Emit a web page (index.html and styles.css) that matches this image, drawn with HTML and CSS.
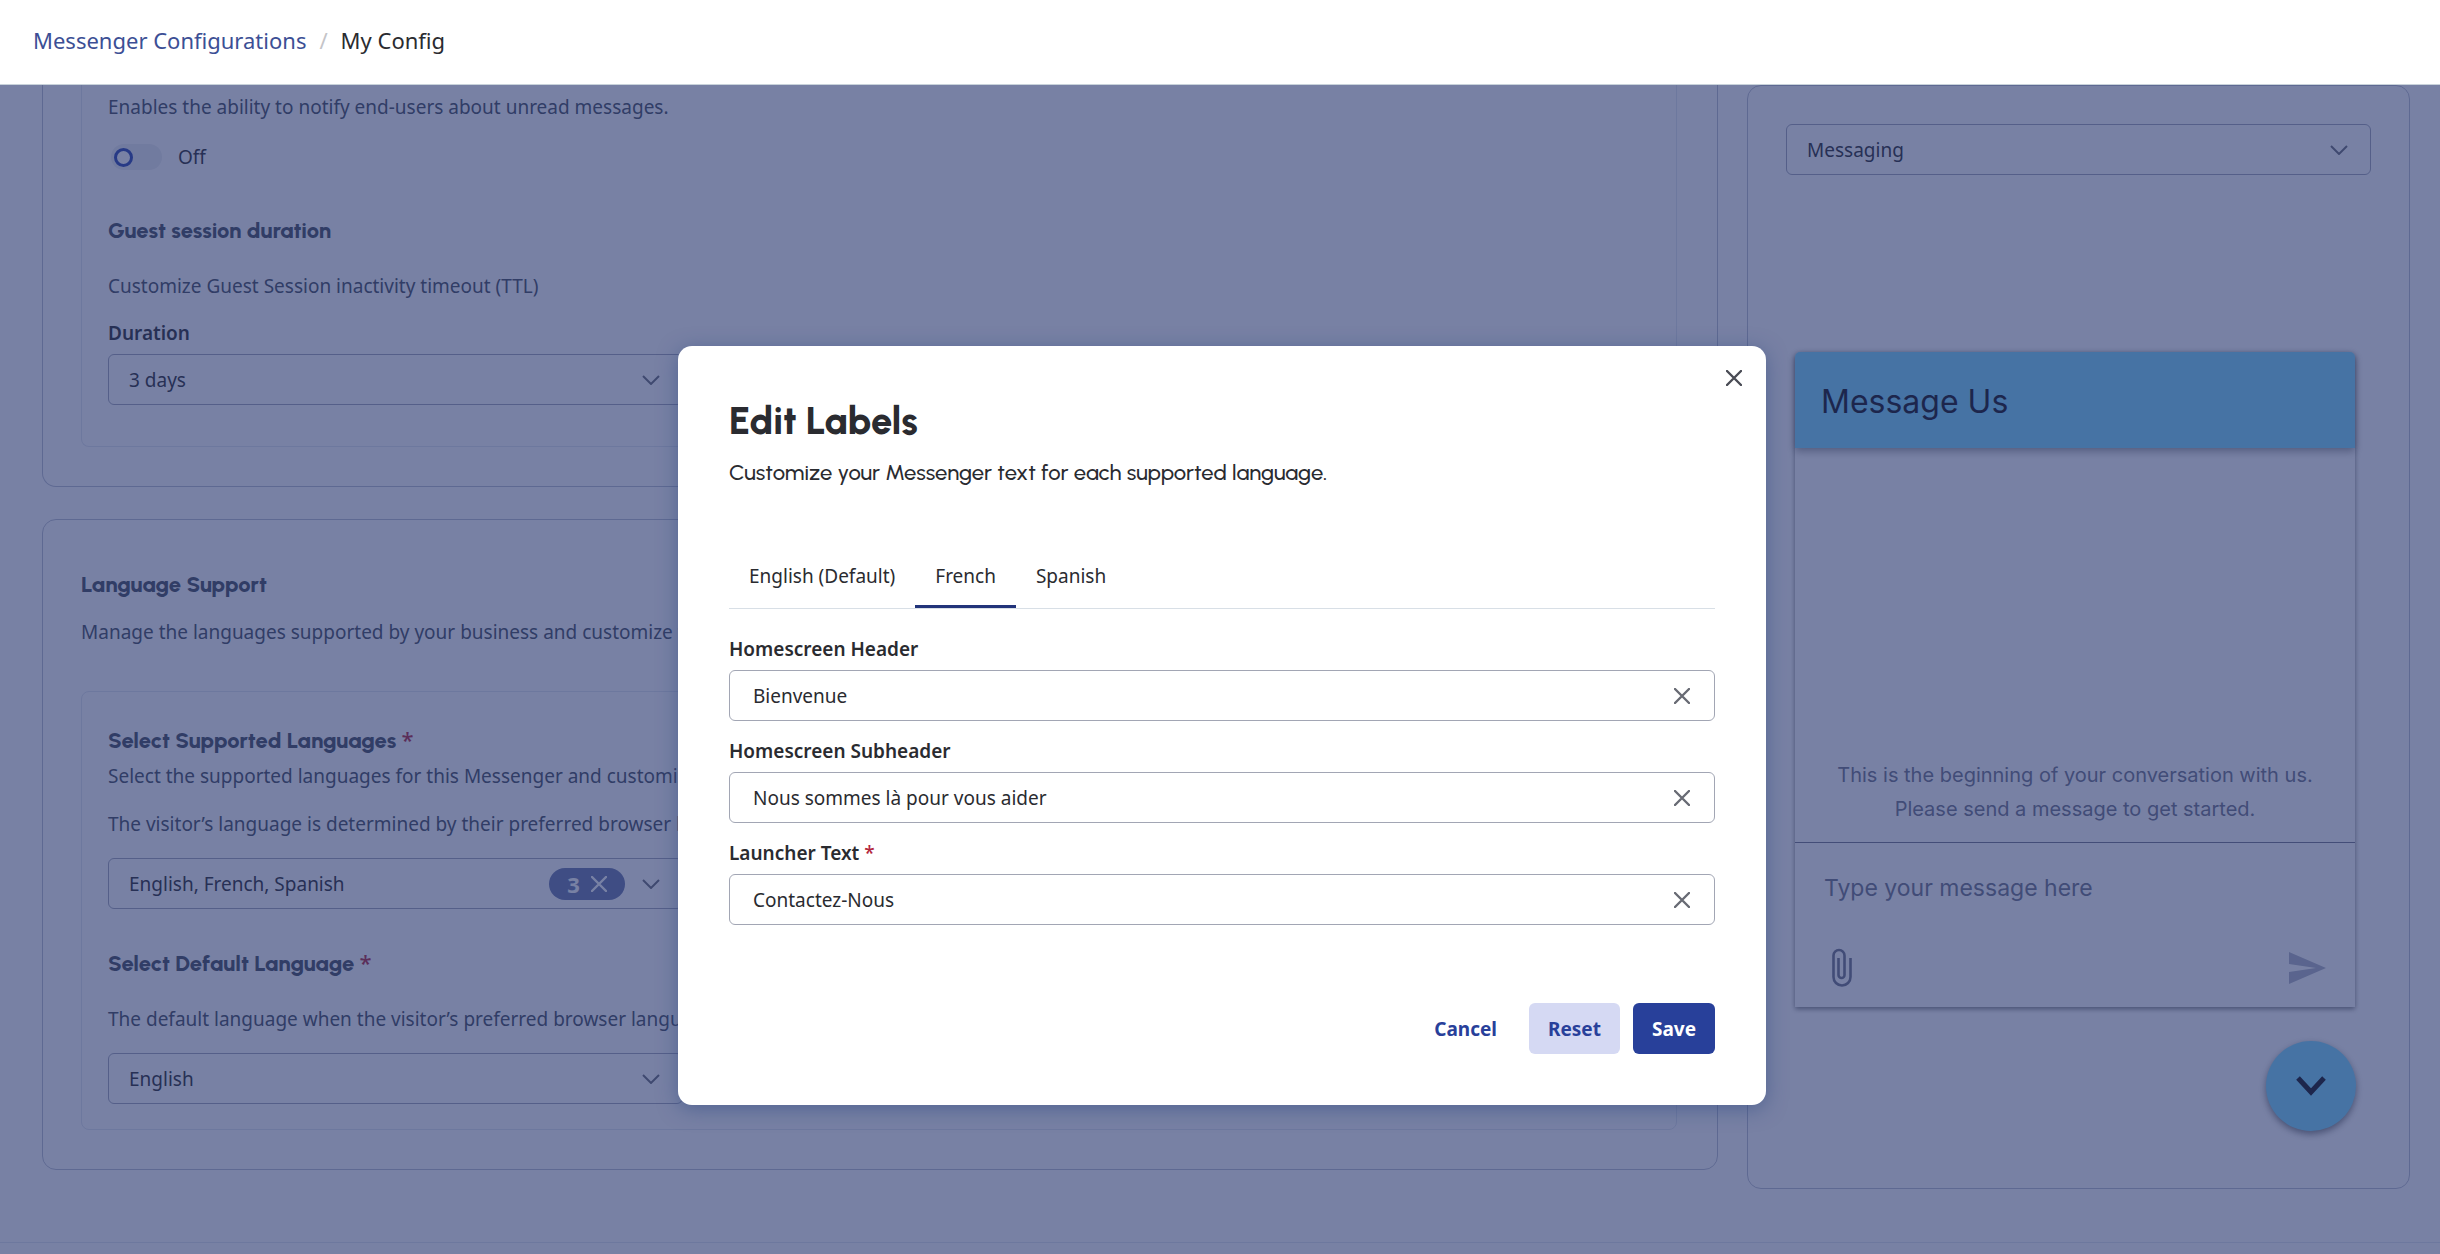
FILE: index.html
```html
<!DOCTYPE html>
<html lang="en">
<head>
    <meta charset="UTF-8">
    <meta name="viewport" content="width=device-width, initial-scale=1.0">
    <title>My Config - Messenger Configurations</title>
    <link rel="stylesheet" href="styles.css">
</head>
<body>
    <header class="topbar">
        <nav class="breadcrumb" aria-label="Breadcrumb">
            <a href="#">Messenger Configurations</a>
            <span class="separator">/</span>
            <span>My Config</span>
        </nav>
    </header>

    <div class="stage">
        <main class="page">
            <div class="settings">
                <section class="card card-scrolled">
                    <div class="panel">
                        <p>Enables the ability to notify end-users about unread messages.</p>
                        <label class="toggle">
                            <input type="checkbox" role="switch">
                            <span>Off</span>
                        </label>
                        <h3>Guest session duration</h3>
                        <p class="after-heading">Customize Guest Session inactivity timeout (TTL)</p>
                        <label class="field-label" for="duration">Duration</label>
                        <div class="select">
                            <select id="duration">
                                <option>3 days</option>
                            </select>
                            <svg class="chevron" viewBox="0 0 18 10"><path d="M1 1l8 8 8-8"/></svg>
                        </div>
                    </div>
                </section>

                <section class="card">
                    <h2>Language Support</h2>
                    <p class="intro">Manage the languages supported by your business and customize the text.</p>
                    <div class="panel">
                        <h3><label for="languages">Select Supported Languages <span class="required">*</span></label></h3>
                        <p class="close-text">Select the supported languages for this Messenger and customize the labels.</p>
                        <p class="help">The visitor’s language is determined by their preferred browser language.</p>
                        <div class="select">
                            <select id="languages">
                                <option>English, French, Spanish</option>
                            </select>
                            <button class="badge" type="button" aria-label="Clear 3 languages">
                                3
                                <svg class="cross" viewBox="0 0 16 16"><path d="M1 1l14 14M15 1L1 15"/></svg>
                            </button>
                            <svg class="chevron" viewBox="0 0 18 10"><path d="M1 1l8 8 8-8"/></svg>
                        </div>
                        <h3><label for="default-language">Select Default Language <span class="required">*</span></label></h3>
                        <p class="after-heading">The default language when the visitor’s preferred browser language is not supported.</p>
                        <div class="select">
                            <select id="default-language">
                                <option>English</option>
                            </select>
                            <svg class="chevron" viewBox="0 0 18 10"><path d="M1 1l8 8 8-8"/></svg>
                        </div>
                    </div>
                </section>
            </div>

            <aside class="preview">
                <div class="select">
                    <select aria-label="Preview screen">
                        <option>Messaging</option>
                    </select>
                    <svg class="chevron" viewBox="0 0 18 10"><path d="M1 1l8 8 8-8"/></svg>
                </div>
                <div class="messenger">
                    <h2 class="messenger-header">Message Us</h2>
                    <p class="conversation">This is the beginning of your conversation with us.<br>Please send a message to get started.</p>
                    <div class="composer">
                        <input type="text" placeholder="Type your message here" aria-label="Type your message here">
                        <div class="composer-actions">
                            <button type="button" aria-label="Attach file">
                                <svg class="clip" viewBox="0 0 20 40"><path d="M18.500 10v19a8.500 8.500 0 0 1-17 0V7.500a5.500 5.500 0 0 1 11 0V27a3 3 0 0 1-6 0V10"/></svg>
                            </button>
                            <button type="button" aria-label="Send">
                                <svg class="send" viewBox="0 0 37 32"><path d="M0 0l37 16L0 32V20l27-4L0 12z"/></svg>
                            </button>
                        </div>
                    </div>
                </div>
                <button class="launcher" type="button" aria-label="Close messenger">
                    <svg viewBox="0 0 30 20"><path d="M2 2l13 14L28 2"/></svg>
                </button>
            </aside>
        </main>
        <footer class="footer"></footer>

        <!-- Edit labels dialog -->
        <div class="overlay">
            <div class="modal" role="dialog" aria-modal="true" aria-labelledby="modal-title">
                <button class="modal-close" type="button" aria-label="Close">
                    <svg class="cross" viewBox="0 0 16 16"><path d="M1 1l14 14M15 1L1 15"/></svg>
                </button>
                <h1 id="modal-title">Edit Labels</h1>
                <p class="modal-intro">Customize your Messenger text for each supported language.</p>

                <div class="tabs" role="tablist">
                    <button type="button" role="tab">English (Default)</button>
                    <button class="active" type="button" role="tab" aria-selected="true">French</button>
                    <button type="button" role="tab">Spanish</button>
                </div>

                <form class="labels-form">
                    <label class="field-label" for="header-text">Homescreen Header</label>
                    <div class="text-field">
                        <input type="text" id="header-text" value="Bienvenue">
                        <button type="button" aria-label="Clear">
                            <svg class="cross" viewBox="0 0 16 16"><path d="M1 1l14 14M15 1L1 15"/></svg>
                        </button>
                    </div>

                    <label class="field-label" for="subheader-text">Homescreen Subheader</label>
                    <div class="text-field">
                        <input type="text" id="subheader-text" value="Nous sommes là pour vous aider">
                        <button type="button" aria-label="Clear">
                            <svg class="cross" viewBox="0 0 16 16"><path d="M1 1l14 14M15 1L1 15"/></svg>
                        </button>
                    </div>

                    <label class="field-label" for="launcher-text">Launcher Text <span class="required">*</span></label>
                    <div class="text-field">
                        <input type="text" id="launcher-text" value="Contactez-Nous">
                        <button type="button" aria-label="Clear">
                            <svg class="cross" viewBox="0 0 16 16"><path d="M1 1l14 14M15 1L1 15"/></svg>
                        </button>
                    </div>

                    <div class="actions">
                        <button class="btn" type="button">Cancel</button>
                        <button class="btn btn-secondary" type="button">Reset</button>
                        <button class="btn btn-primary" type="button">Save</button>
                    </div>
                </form>
            </div>
        </div>
    </div>
</body>
</html>
```
FILE: styles.css
```css
/* Global styles */
* {
    box-sizing: border-box;
}

body {
    margin: 0;
    height: 100vh;
    overflow: hidden;
    display: flex;
    flex-direction: column;
    font-family: "Noto Sans", sans-serif;
    font-size: 19px;
    line-height: 26px;
    color: #2a2b30;
    background-color: #fff;
}

h1, h2, h3, p {
    margin: 0;
}

h1, h2, h3 {
    font-family: Urbanist, Lato, sans-serif;
    font-weight: 800;
}

h2, h3 {
    font-size: 22px;
    line-height: 28px;
    color: #444c5c;
}

button, input, select {
    font: inherit;
    color: inherit;
}

button {
    padding: 0;
    border: none;
    background: none;
    cursor: pointer;
}

svg {
    display: block;
    fill: none;
    stroke: currentColor;
}

.required {
    color: #b3263c;
    font-family: "Noto Sans", sans-serif;
    font-weight: 500;
    line-height: 1;
}

.cross {
    width: 16px;
    height: 16px;
    stroke-width: 2.4;
    stroke-linecap: round;
}

/* Top bar */
.topbar {
    height: 85px;
    flex-shrink: 0;
    padding: 0 33px;
    display: flex;
    align-items: center;
    border-bottom: 1px solid #c8d2da;
}

.breadcrumb {
    display: flex;
    font-size: 22px;
    line-height: 32px;
    padding-bottom: 5px;
}

.breadcrumb a {
    color: #3c4f95;
    text-decoration: none;
}

.separator {
    margin: 0 13px;
    color: #c4c4c8;
}

/* Page behind the dialog */
.stage {
    position: relative;
    flex: 1;
    min-height: 0;
    overflow: hidden;
}

.page {
    display: flex;
    align-items: flex-start;
    gap: 29px;
    padding: 0 30px 53px 42px;
}

.page p {
    color: #444c5c;
}

.settings {
    flex: 1;
    min-width: 0;
    display: flex;
    flex-direction: column;
    gap: 32px;
}

.card {
    padding: 51px 40px 39px 38px;
    border: 1px solid #bcc1d0;
    border-radius: 14px;
}

.panel {
    padding: 35px 26px 25px;
    border: 1px solid #e2e6ee;
    border-radius: 8px;
}

.card-scrolled {
    padding-top: 0;
    border-top: none;
    border-radius: 0 0 14px 14px;
}

.card-scrolled .panel {
    padding: 9px 26px 41px;
    border-top: none;
    border-radius: 0 0 8px 8px;
}

.intro {
    margin: 20px 0 46px;
}

.panel .after-heading {
    margin: 28px 0 21px;
}

.close-text {
    margin: 8px 0 22px;
}

.help {
    margin-bottom: 21px;
}

.panel .select {
    width: 575px;
}

.select + h3 {
    margin-top: 41px;
}

.field-label {
    display: block;
    margin-bottom: 8px;
    font-weight: 600;
}

.toggle {
    display: flex;
    align-items: center;
    gap: 16px;
    margin: 24px 0 47px 3px;
}

.toggle input {
    appearance: none;
    width: 51px;
    height: 26px;
    margin: 0;
    border-radius: 13px;
    background-color: #eceef2;
}

.toggle input::before {
    content: "";
    display: block;
    width: 19px;
    height: 19px;
    margin: 4px 3px;
    box-sizing: border-box;
    border: 3px solid #2a44b0;
    border-radius: 50%;
    background-color: #fff;
}

/* Drop-downs */
.select {
    position: relative;
}

.select select {
    appearance: none;
    display: block;
    width: 100%;
    height: 51px;
    padding: 0 20px;
    border: 1px solid #a2a6b8;
    border-radius: 6px;
    background-color: transparent;
}

.chevron {
    position: absolute;
    right: 23px;
    top: 21px;
    width: 18px;
    height: 10px;
    stroke: #6b6d78;
    stroke-width: 2;
    pointer-events: none;
}

.badge {
    position: absolute;
    right: 58px;
    top: 10px;
    width: 76px;
    height: 32px;
    display: flex;
    align-items: center;
    justify-content: center;
    gap: 11px;
    border-radius: 16px;
    background-color: #6977ac;
    color: #fff;
    font-size: 22px;
    font-weight: 700;
}

/* Messenger preview */
.preview {
    width: 663px;
    min-height: 1104px;
    padding: 38px;
    border: 1px solid #bcc1d0;
    border-radius: 14px;
    display: flex;
    flex-direction: column;
}

.messenger {
    margin: 177px 16px 0 9px;
    height: 655px;
    display: flex;
    flex-direction: column;
    border-radius: 5px 5px 0 0;
    font-family: Inter, sans-serif;
    box-shadow: 0 2px 5px rgba(0, 0, 0, 0.5);
}

.messenger-header {
    padding: 30px 26px 26px;
    border-radius: 5px 5px 0 0;
    background-color: #7bdbff;
    box-shadow: 0 3px 8px rgba(0, 0, 0, 0.4);
    font-family: Inter, sans-serif;
    font-size: 32px;
    line-height: 40px;
    font-weight: 400;
    color: #10101a;
}

.page .conversation {
    margin-top: auto;
    padding-bottom: 16px;
    font-size: 20px;
    line-height: 34px;
    text-align: center;
    color: #70738a;
}

.composer {
    padding: 29px 29px 19px;
    border-top: 1px solid #74788c;
}

.composer input {
    display: block;
    width: 100%;
    height: 32px;
    padding: 0;
    border: none;
    background: none;
    font-size: 23px;
}

.composer input::placeholder {
    color: #70738a;
    opacity: 1;
}

.composer-actions {
    display: flex;
    align-items: center;
    justify-content: space-between;
    margin-top: 44px;
    padding-left: 8px;
}

.clip {
    width: 20px;
    height: 40px;
    stroke: #70738a;
    stroke-width: 2.6;
}

.send {
    width: 37px;
    height: 32px;
    fill: #b0b4c4;
    stroke: none;
}

.launcher {
    align-self: flex-end;
    width: 90px;
    height: 90px;
    margin: 34px 15px 0 0;
    display: flex;
    align-items: center;
    justify-content: center;
    border-radius: 50%;
    background-color: #7bdbff;
    box-shadow: 0 3px 7px rgba(0, 0, 0, 0.5);
    color: #10101a;
}

.launcher svg {
    width: 30px;
    height: 20px;
    stroke-width: 5;
}

.footer {
    height: 40px;
    border-top: 1px solid #e2e6ee;
}

/* Dialog */
.overlay {
    position: absolute;
    inset: 0;
    padding: 261px 24px 0 28px;
    background-color: rgba(37, 52, 108, 0.62);
}

.modal {
    position: relative;
    max-width: 1088px;
    margin: 0 auto;
    padding: 51px;
    border-radius: 14px;
    background-color: #fff;
    box-shadow: 0 4px 20px rgba(44, 72, 130, 0.5);
}

.modal-close {
    position: absolute;
    top: 16px;
    right: 16px;
    padding: 8px;
    color: #4a4c55;
}

.modal h1 {
    font-size: 38px;
    line-height: 48px;
}

.modal-intro {
    margin-top: 12px;
    font-family: Urbanist, Lato, sans-serif;
    font-size: 22px;
    font-weight: 500;
    line-height: 32px;
}

.tabs {
    display: flex;
    margin: 58px 0 27px;
    border-bottom: 1px solid #d8dfe6;
}

.tabs button {
    padding: 16px 20px;
    border-bottom: 3px solid transparent;
}

.tabs .active {
    border-color: #22347a;
}

.text-field {
    position: relative;
    margin-bottom: 17px;
}

.text-field input {
    display: block;
    width: 100%;
    height: 51px;
    padding: 0 60px 0 23px;
    border: 1px solid #a2a6b4;
    border-radius: 6px;
    background-color: #fff;
}

.text-field button {
    position: absolute;
    top: 10px;
    right: 17px;
    padding: 8px;
    color: #686b74;
}

.actions {
    display: flex;
    justify-content: flex-end;
    gap: 13px;
    margin-top: 78px;
}

.btn {
    height: 51px;
    padding: 0 19px;
    border-radius: 6px;
    color: #28409a;
    font-weight: 700;
}

.btn-secondary {
    background-color: #d5d9f3;
}

.btn-primary {
    background-color: #28409a;
    color: #fff;
}
```
